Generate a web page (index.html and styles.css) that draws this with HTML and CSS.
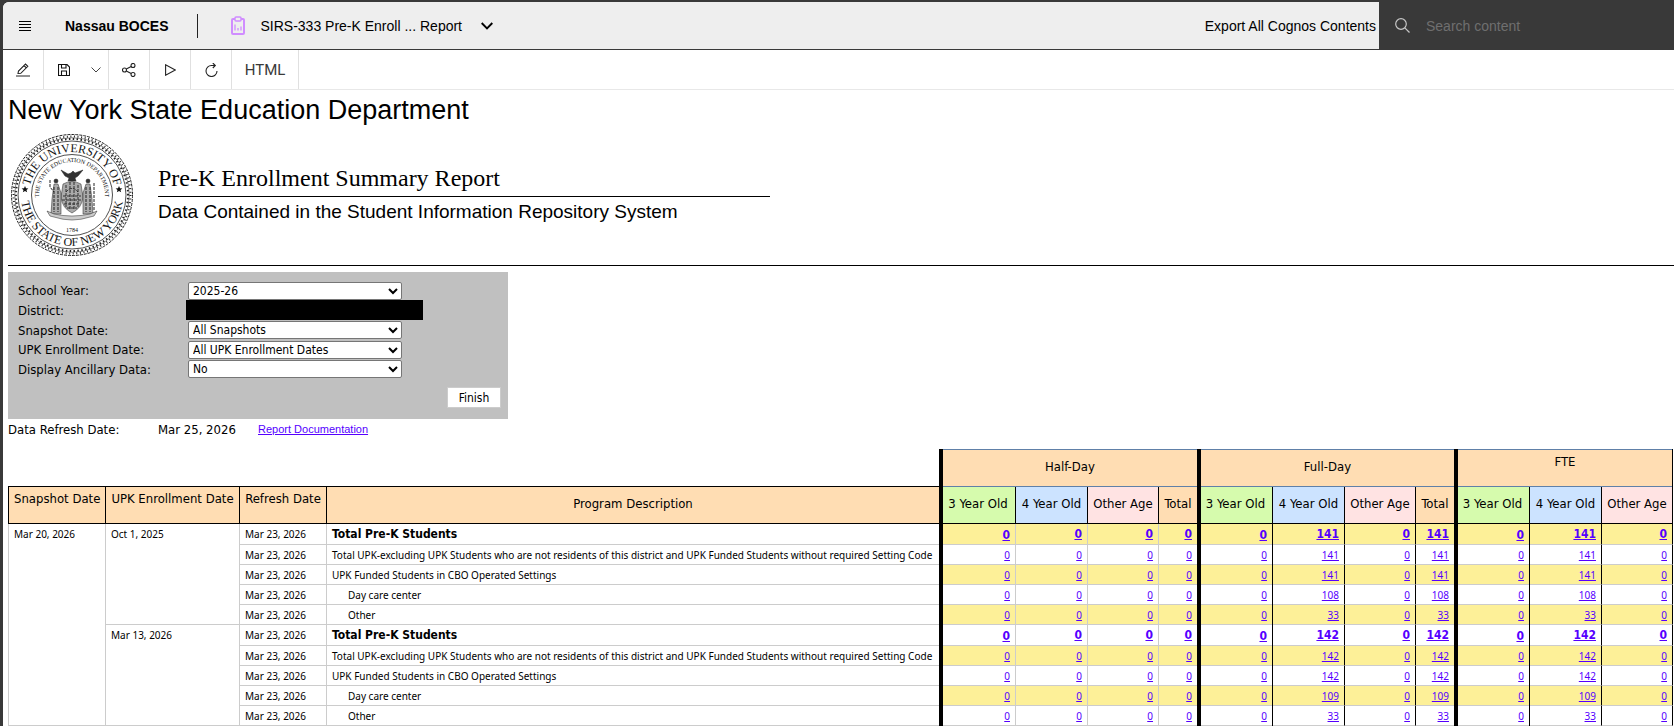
FILE: index.html
```html
<!DOCTYPE html>
<html lang="en">
<head>
<meta charset="utf-8">
<title>SIRS-333 Pre-K Enrollment Summary Report</title>
<link rel="stylesheet" href="styles.css">
</head>
<body>
<div class="app">
<header class="appbar">
  <button class="menu" aria-label="Menu"><svg width="12" height="10" viewBox="0 0 12 10"><path d="M0 .5h12M0 3.5h12M0 6.5h12M0 9.5h12" stroke="#000"/></svg></button>
  <strong class="brand">Nassau BOCES</strong>
  <span class="divider"></span>
  <button class="report-switch">
    <svg width="14" height="19" viewBox="0 0 14 19" fill="none" stroke="#d08cff"><rect x="1" y="3" width="12" height="15" rx="1" stroke-width="2"/><rect x="4" y="1" width="6" height="4" rx="1" fill="#eee" stroke-width="1.5"/><path d="M4 8.500v6M7 12v2.500M10 10.500v4" stroke-width="1.300"/></svg>
    <span>SIRS-333 Pre-K Enroll ... Report</span>
    <svg width="12" height="8" viewBox="0 0 12 8"><path d="M.7 1 6 6.300 11.300 1" fill="none" stroke="#000" stroke-width="1.900"/></svg>
  </button>
  <a class="export" href="#">Export All Cognos Contents</a>
  <label class="search">
    <svg width="15" height="15" viewBox="0 0 15 15" fill="none" stroke="#c6c6c6" stroke-width="1.200"><circle cx="6" cy="6" r="5.300"/><path d="m9.800 9.800 4.700 4.700"/></svg>
    <input type="search" placeholder="Search content" aria-label="Search content">
  </label>
</header>
<nav class="toolbar">
  <button class="tool" aria-label="Edit"><svg width="16" height="14" viewBox="0 0 16 14" fill="none" stroke="#222"><path d="M1 13h14"/><path d="M3 10.500 3.500 8 10.500 1l2.300 2.300-7 7ZM9 2.500l2.300 2.300" stroke-width="1.100"/></svg></button>
  <div class="tool-pair">
    <button class="tool" aria-label="Save"><svg width="12" height="12" viewBox="0 0 12 12" fill="none" stroke="#111" stroke-width="1.100"><path d="M.5.500h8.500l2.500 2.500v8.500H.5ZM3.500.500v3.500h4.500v-3.500M3.500 11.500v-4.500h5v4.500"/></svg></button>
    <button class="more" aria-label="Save options"><svg width="10" height="6" viewBox="0 0 10 6"><path d="m.5.500 4.500 4.500 4.500-4.500" fill="none" stroke="#444"/></svg></button>
  </div>
  <button class="tool" aria-label="Share"><svg width="14" height="14" viewBox="0 0 14 14" fill="none" stroke="#222" stroke-width="1.100"><circle cx="2.500" cy="7" r="2"/><circle cx="11" cy="2.500" r="2"/><circle cx="11" cy="11.500" r="2"/><path d="M4.300 6 9.200 3.500M4.300 8l4.900 2.500"/></svg></button>
  <button class="tool" aria-label="Run"><svg width="11" height="12" viewBox="0 0 11 12"><path d="M.6.800v10.400L10.300 6Z" fill="none" stroke="#222" stroke-width="1.100"/></svg></button>
  <button class="tool" aria-label="Refresh"><svg width="13" height="14" viewBox="0 0 13 14" fill="none" stroke="#222" stroke-width="1.100"><path d="M12 8a5.500 5.500 0 1 1-5.500-5.500H10M7.800 0l2.500 2.500L7.800 5"/></svg></button>
  <button class="format">HTML</button>
</nav>
<main class="report">
  <h1>New York State Education Department</h1>
  <section class="masthead">
    <svg class="seal" width="124" height="124" viewBox="-62 -62 124 124" role="img" aria-label="Seal of the University of the State of New York">
      <defs>
        <path id="arc-top" d="M-43 0A43 43 0 0 1 43 0"/>
        <path id="arc-bottom" d="M-51 0A51 51 0 0 0 51 0"/>
        <path id="arc-inner" d="M-28.600 16.500A33 33 0 1 1 28.600 16.500"/>
      </defs>
      <g fill="none" stroke="#222">
        <circle r="60.500" stroke-width="1" stroke-dasharray="3 1"/>
        <circle r="58.500" stroke-width="2" stroke-dasharray="1 2.600"/>
        <circle r="56" stroke-width="2" stroke-dasharray="1.500 2.400" stroke-dashoffset="1"/>
        <circle r="57.300" stroke-width=".5"/>
        <circle r="54" stroke-width=".8"/>
        <circle r="40.500" stroke-width=".8"/>
      </g>
      <g class="seal-text" text-anchor="middle">
        <text font-size="12"><textPath href="#arc-top" startOffset="50%">THE UNIVERSITY OF</textPath></text>
        <text font-size="12"><textPath href="#arc-bottom" startOffset="50%">THE STATE OF NEW YORK</textPath></text>
        <text font-size="6"><textPath href="#arc-inner" startOffset="50%">THE STATE EDUCATION DEPARTMENT</textPath></text>
        <text font-size="6" y="37">1784</text>
      </g>
      <path d="M-47-9l1 2.200 2.400.2-1.900 1.500.7 2.400-2.200-1.300-2.200 1.300.7-2.400-1.900-1.500 2.400-.2ZM47-9l1 2.200 2.400.2-1.900 1.500.7 2.400-2.200-1.300-2.200 1.300.7-2.400-1.900-1.500 2.400-.2Z" fill="#111"/>
      <g fill="#333" stroke="#222" stroke-width=".5">
        <path d="M-11-25-4-21-1-22 1-24 3-22 11-25 6-19 3-17 4-14H-4L-3-17-7-19Z"/>
        <path d="M-9-11Q0-16 9-11L11 2Q10 13 0 18-10 13-11 2Z" fill="#aaa"/>
        <path d="M-6-3q6-7 12 0M-9 1H9M-10 5H10M-8 9H8M-5 13H5M-6-10v22M-2-13v28M2-13v28M6-10v22" fill="none" stroke-dasharray="3 1" stroke-width=".9"/>
        <circle cx="-16" cy="-14" r="2"/><circle cx="16" cy="-14" r="2"/>
        <path d="M-18-11h4l3 9 0 21h-10l1-15Z" fill="#aaa"/><path d="M18-11h-4l-3 9 0 21h10l-1-15Z" fill="#aaa"/>
        <path d="M-22-15v6l3 4M23-11-23 17M-23-11-23 17" fill="none" stroke-width="0"/>
        <path d="M-22-15v7l4 5M-18-8-18 17M-14-8-14 17M14-8 14 17M18-8 18 17M22-12V16" fill="none" stroke-dasharray="3 1" stroke-width="1"/>
        <path d="M-25 16-18 19Q0 23 18 19L25 16 22 21 18 22Q0 28-18 22L-22 21Z" fill="#ccc"/>
      </g>
    </svg>
    <div class="titles">
      <h2>Pre-K Enrollment Summary Report</h2>
      <p>Data Contained in the Student Information Repository System</p>
    </div>
  </section>
  <form class="prompts">
    <div class="fields">
      <label for="year">School Year:</label><select id="year"><option>2025-26</option></select>
      <span>District:</span><span class="redacted"></span>
      <label for="snap">Snapshot Date:</label><select id="snap"><option>All Snapshots</option></select>
      <label for="upk">UPK Enrollment Date:</label><select id="upk"><option>All UPK Enrollment Dates</option></select>
      <label for="anc">Display Ancillary Data:</label><select id="anc"><option>No</option></select>
    </div>
    <button class="finish" type="button">Finish</button>
  </form>
  <div class="refresh"><span>Data Refresh Date:</span><span>Mar 25, 2026</span><a href="#">Report Documentation</a></div>
  <table class="grid">
    <colgroup><col class="c-snap"><col class="c-upk"><col class="c-ref"><col class="c-desc"><col class="c-lead"><col class="c-four"><col class="c-age"><col class="c-total"><col class="c-three"><col class="c-four"><col class="c-age"><col class="c-total"><col class="c-three"><col class="c-four"><col class="c-age"></colgroup>
    <thead>
      <tr class="groups"><td class="blank" colspan="4"></td><th class="group first" colspan="4">Half-Day</th><th class="group first" colspan="4">Full-Day</th><th class="group first high last" colspan="3">FTE</th></tr>
      <tr class="heads"><th class="left edge">Snapshot Date</th><th class="left">UPK Enrollment Date</th><th class="left">Refresh Date</th><th class="desc">Program Description</th>
        <th class="three first">3 Year Old</th><th class="four">4 Year Old</th><th class="age">Other Age</th><th class="end">Total</th>
        <th class="three first">3 Year Old</th><th class="four">4 Year Old</th><th class="age">Other Age</th><th class="end">Total</th>
        <th class="three first">3 Year Old</th><th class="four">4 Year Old</th><th class="age">Other Age</th></tr>
    </thead>
    <tbody>
      <tr class="sum"><td class="edge" rowspan="10">Mar 20, 2026</td><td rowspan="5">Oct 1, 2025</td><td>Mar 23, 2026</td><td class="desc">Total Pre-K Students</td><td class="n first"><a href="#">0</a></td><td class="n"><a href="#">0</a></td><td class="n"><a href="#">0</a></td><td class="n end"><a href="#">0</a></td><td class="n k first"><a href="#">0</a></td><td class="n k"><a href="#">141</a></td><td class="n k"><a href="#">0</a></td><td class="n end"><a href="#">141</a></td><td class="n k first"><a href="#">0</a></td><td class="n k"><a href="#">141</a></td><td class="n k"><a href="#">0</a></td></tr>
      <tr><td>Mar 23, 2026</td><td class="desc">Total UPK-excluding UPK Students who are not residents of this district and UPK Funded Students without required Setting Code</td><td class="n first"><a href="#">0</a></td><td class="n"><a href="#">0</a></td><td class="n"><a href="#">0</a></td><td class="n end"><a href="#">0</a></td><td class="n k first"><a href="#">0</a></td><td class="n k"><a href="#">141</a></td><td class="n k"><a href="#">0</a></td><td class="n end"><a href="#">141</a></td><td class="n k first"><a href="#">0</a></td><td class="n k"><a href="#">141</a></td><td class="n k"><a href="#">0</a></td></tr>
      <tr><td>Mar 23, 2026</td><td class="desc">UPK Funded Students in CBO Operated Settings</td><td class="n first"><a href="#">0</a></td><td class="n"><a href="#">0</a></td><td class="n"><a href="#">0</a></td><td class="n end"><a href="#">0</a></td><td class="n k first"><a href="#">0</a></td><td class="n k"><a href="#">141</a></td><td class="n k"><a href="#">0</a></td><td class="n end"><a href="#">141</a></td><td class="n k first"><a href="#">0</a></td><td class="n k"><a href="#">141</a></td><td class="n k"><a href="#">0</a></td></tr>
      <tr><td>Mar 23, 2026</td><td class="desc sub">Day care center</td><td class="n first"><a href="#">0</a></td><td class="n"><a href="#">0</a></td><td class="n"><a href="#">0</a></td><td class="n end"><a href="#">0</a></td><td class="n k first"><a href="#">0</a></td><td class="n k"><a href="#">108</a></td><td class="n k"><a href="#">0</a></td><td class="n end"><a href="#">108</a></td><td class="n k first"><a href="#">0</a></td><td class="n k"><a href="#">108</a></td><td class="n k"><a href="#">0</a></td></tr>
      <tr><td>Mar 23, 2026</td><td class="desc sub">Other</td><td class="n first"><a href="#">0</a></td><td class="n"><a href="#">0</a></td><td class="n"><a href="#">0</a></td><td class="n end"><a href="#">0</a></td><td class="n k first"><a href="#">0</a></td><td class="n k"><a href="#">33</a></td><td class="n k"><a href="#">0</a></td><td class="n end"><a href="#">33</a></td><td class="n k first"><a href="#">0</a></td><td class="n k"><a href="#">33</a></td><td class="n k"><a href="#">0</a></td></tr>
      <tr class="sum"><td rowspan="5">Mar 13, 2026</td><td>Mar 23, 2026</td><td class="desc">Total Pre-K Students</td><td class="n first"><a href="#">0</a></td><td class="n"><a href="#">0</a></td><td class="n"><a href="#">0</a></td><td class="n end"><a href="#">0</a></td><td class="n k first"><a href="#">0</a></td><td class="n k"><a href="#">142</a></td><td class="n k"><a href="#">0</a></td><td class="n end"><a href="#">142</a></td><td class="n k first"><a href="#">0</a></td><td class="n k"><a href="#">142</a></td><td class="n k"><a href="#">0</a></td></tr>
      <tr><td>Mar 23, 2026</td><td class="desc">Total UPK-excluding UPK Students who are not residents of this district and UPK Funded Students without required Setting Code</td><td class="n first"><a href="#">0</a></td><td class="n"><a href="#">0</a></td><td class="n"><a href="#">0</a></td><td class="n end"><a href="#">0</a></td><td class="n k first"><a href="#">0</a></td><td class="n k"><a href="#">142</a></td><td class="n k"><a href="#">0</a></td><td class="n end"><a href="#">142</a></td><td class="n k first"><a href="#">0</a></td><td class="n k"><a href="#">142</a></td><td class="n k"><a href="#">0</a></td></tr>
      <tr><td>Mar 23, 2026</td><td class="desc">UPK Funded Students in CBO Operated Settings</td><td class="n first"><a href="#">0</a></td><td class="n"><a href="#">0</a></td><td class="n"><a href="#">0</a></td><td class="n end"><a href="#">0</a></td><td class="n k first"><a href="#">0</a></td><td class="n k"><a href="#">142</a></td><td class="n k"><a href="#">0</a></td><td class="n end"><a href="#">142</a></td><td class="n k first"><a href="#">0</a></td><td class="n k"><a href="#">142</a></td><td class="n k"><a href="#">0</a></td></tr>
      <tr><td>Mar 23, 2026</td><td class="desc sub">Day care center</td><td class="n first"><a href="#">0</a></td><td class="n"><a href="#">0</a></td><td class="n"><a href="#">0</a></td><td class="n end"><a href="#">0</a></td><td class="n k first"><a href="#">0</a></td><td class="n k"><a href="#">109</a></td><td class="n k"><a href="#">0</a></td><td class="n end"><a href="#">109</a></td><td class="n k first"><a href="#">0</a></td><td class="n k"><a href="#">109</a></td><td class="n k"><a href="#">0</a></td></tr>
      <tr><td>Mar 23, 2026</td><td class="desc sub">Other</td><td class="n first"><a href="#">0</a></td><td class="n"><a href="#">0</a></td><td class="n"><a href="#">0</a></td><td class="n end"><a href="#">0</a></td><td class="n k first"><a href="#">0</a></td><td class="n k"><a href="#">33</a></td><td class="n k"><a href="#">0</a></td><td class="n end"><a href="#">33</a></td><td class="n k first"><a href="#">0</a></td><td class="n k"><a href="#">33</a></td><td class="n k"><a href="#">0</a></td></tr>
    </tbody>
  </table>
</main>
</div>
</body>
</html>
```
FILE: styles.css
```css
* { box-sizing: border-box; }
body {
  margin: 0;
  background: #393939;
  color: #000;
  font-family: "DejaVu Sans Condensed", "DejaVu Sans", sans-serif;
  font-size: 13px;
}
button {
  border: 0;
  padding: 0;
  background: none;
  color: inherit;
  font: inherit;
}
svg { display: block; flex: none; }
a { color: #5500ff; }

.app {
  margin: 2px 0 0 3px;
  background: #fff;
  border-top-left-radius: 6px;
  overflow: hidden;
}

/* Application bar */
.appbar {
  display: flex;
  align-items: center;
  height: 48px;
  background: #eee;
  border-bottom: 1px solid #393939;
  font: 14px "Liberation Sans", sans-serif;
}
.menu { padding: 0 16px; }
.brand { margin-left: 18px; }
.divider {
  width: 1px;
  height: 24px;
  margin: 0 33px 0 29px;
  background: #222;
}
.report-switch {
  display: flex;
  align-items: center;
  gap: 15px;
}
.report-switch svg:last-child { margin-left: 4px; }
.export {
  margin-left: auto;
  padding-right: 3px;
  color: #000;
  text-decoration: none;
}
.search {
  display: flex;
  align-items: center;
  align-self: stretch;
  gap: 16px;
  width: 295px;
  padding-left: 16px;
  background: #393939;
}
.search input {
  flex: 1;
  min-width: 0;
  padding: 0;
  border: 0;
  outline: 0;
  background: none;
  color: #fff;
  font: inherit;
}
.search input::placeholder { color: #6f6f6f; }

/* Toolbar */
.toolbar {
  display: flex;
  height: 40px;
  border-bottom: 1px solid #e8e8e8;
}
.toolbar > * { border-right: 1px solid #e0e0e0; }
.tool {
  display: grid;
  place-items: center;
  width: 41px;
}
.tool-pair { display: flex; width: 65px; }
.more {
  display: grid;
  place-items: center;
  width: 24px;
}
.format {
  width: 67px;
  color: #393939;
  font: 15px Roboto, sans-serif;
}

/* Report */
.report { padding-left: 5px; }
h1, h2, p { margin: 0; font-weight: 400; }
h1 {
  padding-top: 4px;
  font: 27px/32px "Liberation Sans", sans-serif;
}
.masthead {
  display: flex;
  align-items: flex-start;
  gap: 24px;
  height: 140px;
  padding: 7px 0 0 2px;
  border-bottom: 1px solid #000;
}
.seal-text { font-family: "Liberation Serif", serif; fill: #111; }
.titles { width: 612px; margin-top: 29px; }
h2 {
  padding-bottom: 2px;
  border-bottom: 1px solid #000;
  font: 24px/32px "Liberation Serif", serif;
}
.titles p { font: 19px/29px "Liberation Sans", sans-serif; }

.prompts {
  display: flex;
  flex-direction: column;
  width: 500px;
  margin-top: 6px;
  padding: 9px 7px 11px 10px;
  background: #c0c0c0;
}
.fields {
  display: grid;
  grid-template-columns: 168px 237px;
  grid-template-rows: 19px 20px 20px 19px 20px;
  align-items: center;
}
.fields select {
  width: 214px;
  height: 18px;
  margin-left: 2px;
  padding: 0;
  border: 1px solid #767676;
  border-radius: 2px;
  background: #fff;
  color: #000;
  font: 12px "DejaVu Sans Condensed", sans-serif;
}
.redacted { height: 20px; background: #000; }
.finish {
  align-self: flex-end;
  width: 54px;
  height: 21px;
  margin-top: 8px;
  border: 1px solid #ccc;
  background: #fff;
  font-size: 12px;
}
.refresh {
  display: grid;
  grid-template-columns: 150px 100px auto;
  justify-content: start;
  align-items: center;
  height: 20px;
}
.refresh a { font: 11px "Liberation Sans", sans-serif; }

/* Data table */
.grid {
  width: calc(100% - 1px);
  min-width: 1665px;
  margin-top: 10px;
  table-layout: fixed;
  border-spacing: 0;
}
.c-snap { width: 98px; }
.c-upk { width: 134px; }
.c-ref { width: 87px; }
.c-lead { width: 77px; }
.c-three { width: 76px; }
.c-four { width: 72px; }
.c-age { width: 71px; }
.c-total { width: 38px; }
.grid th, .grid td { padding: 0 5px; white-space: nowrap; }
.grid th {
  padding-bottom: 4px;
  border: 0 solid #000;
  border-width: 0 1px 1px 0;
  background: #ffddb3;
  font-weight: 400;
}
.groups { height: 38px; }
.heads { height: 37px; }
.grid .blank { border-bottom: 1px solid #000; }
.grid .group { border-right: 0; }
.grid .group.last { border-right: 1px solid #000; }
.grid .high, .grid .heads .left { padding-bottom: 14px; }
.grid .heads .three { background: #d6fbad; }
.grid .heads .four { background: #cce3ff; }
.grid .heads .age { background: #ffe3e3; }

.grid tbody td {
  height: 20px;
  border: 0 solid #ccc;
  border-width: 0 1px 1px 0;
  font: 10px/14px "Noto Sans", sans-serif;
}
.grid tbody .sum td { height: 21px; }
.grid td[rowspan] { padding-top: 3px; vertical-align: top; }
.grid .edge { border-left: 1px solid #000; }
.grid tbody .edge { border-left-color: #ccc; }
.grid .desc, .grid .end { border-right: 0; }
.grid tbody .sub { padding-left: 21px; }
.grid tbody .n { text-align: right; }
.grid tbody .k { border-right-color: #000; }
.grid tbody tr:nth-child(odd) .n { background: #fdf098; }
.grid tbody .sum .desc,
.grid tbody .sum .n { font: bold 12px/14px "DejaVu Sans Condensed", sans-serif; }

/* Group bars run unbroken, so the row lines beside them are inset shadows */
.grid .first, .grid tbody .first {
  border-left: 4px solid #000;
  border-bottom: 0;
  box-shadow: inset 0 -1px #ccc;
}
.grid .heads .first {
  padding-left: 3px;
  box-shadow: inset 0 -1px #000;
}
.grid .group.first { box-shadow: inset 0 1px #6080a8, inset 0 -1px #6080a8; }
```
